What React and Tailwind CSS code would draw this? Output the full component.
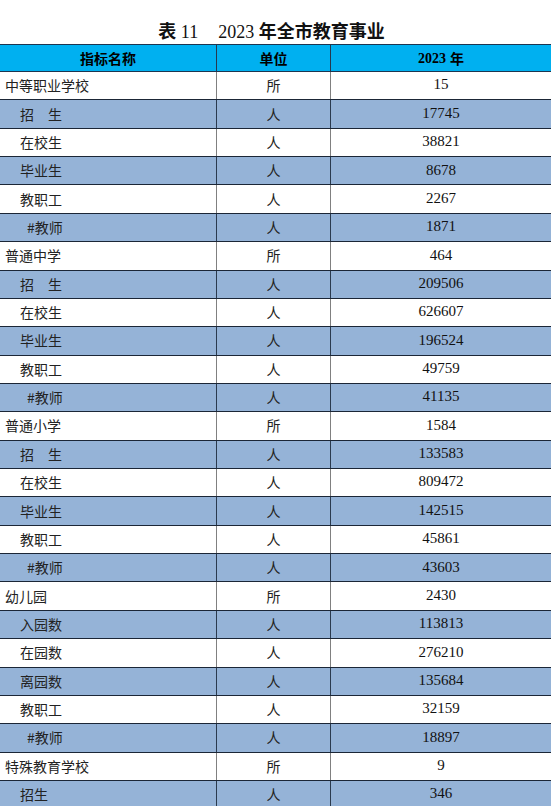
import React from "react";

const rows = [
  ["中等职业学校", 0, "所", "15"],
  ["招\u3000生", 1, "人", "17745"],
  ["在校生", 1, "人", "38821"],
  ["毕业生", 1, "人", "8678"],
  ["教职工", 1, "人", "2267"],
  ["#教师", 2, "人", "1871"],
  ["普通中学", 0, "所", "464"],
  ["招\u3000生", 1, "人", "209506"],
  ["在校生", 1, "人", "626607"],
  ["毕业生", 1, "人", "196524"],
  ["教职工", 1, "人", "49759"],
  ["#教师", 2, "人", "41135"],
  ["普通小学", 0, "所", "1584"],
  ["招\u3000生", 1, "人", "133583"],
  ["在校生", 1, "人", "809472"],
  ["毕业生", 1, "人", "142515"],
  ["教职工", 1, "人", "45861"],
  ["#教师", 2, "人", "43603"],
  ["幼儿园", 0, "所", "2430"],
  ["入园数", 1, "人", "113813"],
  ["在园数", 1, "人", "276210"],
  ["离园数", 1, "人", "135684"],
  ["教职工", 1, "人", "32159"],
  ["#教师", 2, "人", "18897"],
  ["特殊教育学校", 0, "所", "9"],
  ["招生", 1, "人", "346"],
];

const indent = ["pl-[5px]", "pl-[20px]", "pl-[27px]"];

const cjk = "font-['Noto_Sans_CJK_SC',sans-serif]";
const serif = "font-['Liberation_Serif','Noto_Sans_CJK_SC',serif]";

const App = () => {
  return (
    <div className="w-[551px] h-[806px] overflow-hidden bg-white text-[#111]">
      <div className="h-[44px] flex items-end justify-center pb-[1px] pr-[8px]">
        <p className={`${serif} text-[18px] leading-[22px]`}>
          <span className={`${cjk} font-bold`}>表</span> 11
          <span className="inline-block w-[20px]"></span>
          2023 <span className={`${cjk} font-bold`}>年全市教育事业</span>
        </p>
      </div>
      <div className="grid grid-cols-[217px_114px_1fr] h-[28px] bg-[#00b0f0] border-t-[1.5px] border-b-[1.5px] border-[#1d3550] text-[14px] font-bold text-black">
        <div className={`${cjk} flex items-center justify-center border-r border-[#26384d]`}>
          指标名称
        </div>
        <div className={`${cjk} flex items-center justify-center border-r border-[#26384d]`}>
          单位
        </div>
        <div className={`${serif} flex items-center justify-center`}>
          2023 <span className={`${cjk} ml-[4px]`}>年</span>
        </div>
      </div>
      {rows.map(([name, level, unit, value], i) => {
        const blue = i % 2 === 1;
        return (
          <div
            key={i}
            className={`grid grid-cols-[217px_114px_1fr] h-[28.36px] border-b-[1.5px] border-[#1b2636] ${
              blue ? "bg-[#95b3d7]" : "bg-white"
            }`}
          >
            <div
              className={`${cjk} ${indent[level]} flex items-center text-[14px] text-[#222] border-r ${
                blue ? "border-[#2a3a4e]" : "border-[#808080]"
              }`}
            >
              {name}
            </div>
            <div
              className={`${cjk} flex items-center justify-center text-[14px] text-[#222] border-r ${
                blue ? "border-[#2a3a4e]" : "border-[#808080]"
              }`}
            >
              {unit}
            </div>
            <div className={`${serif} flex items-center justify-center text-[15px] text-[#111] pb-[2px]`}>
              {value}
            </div>
          </div>
        );
      })}
    </div>
  );
};

export default App;
